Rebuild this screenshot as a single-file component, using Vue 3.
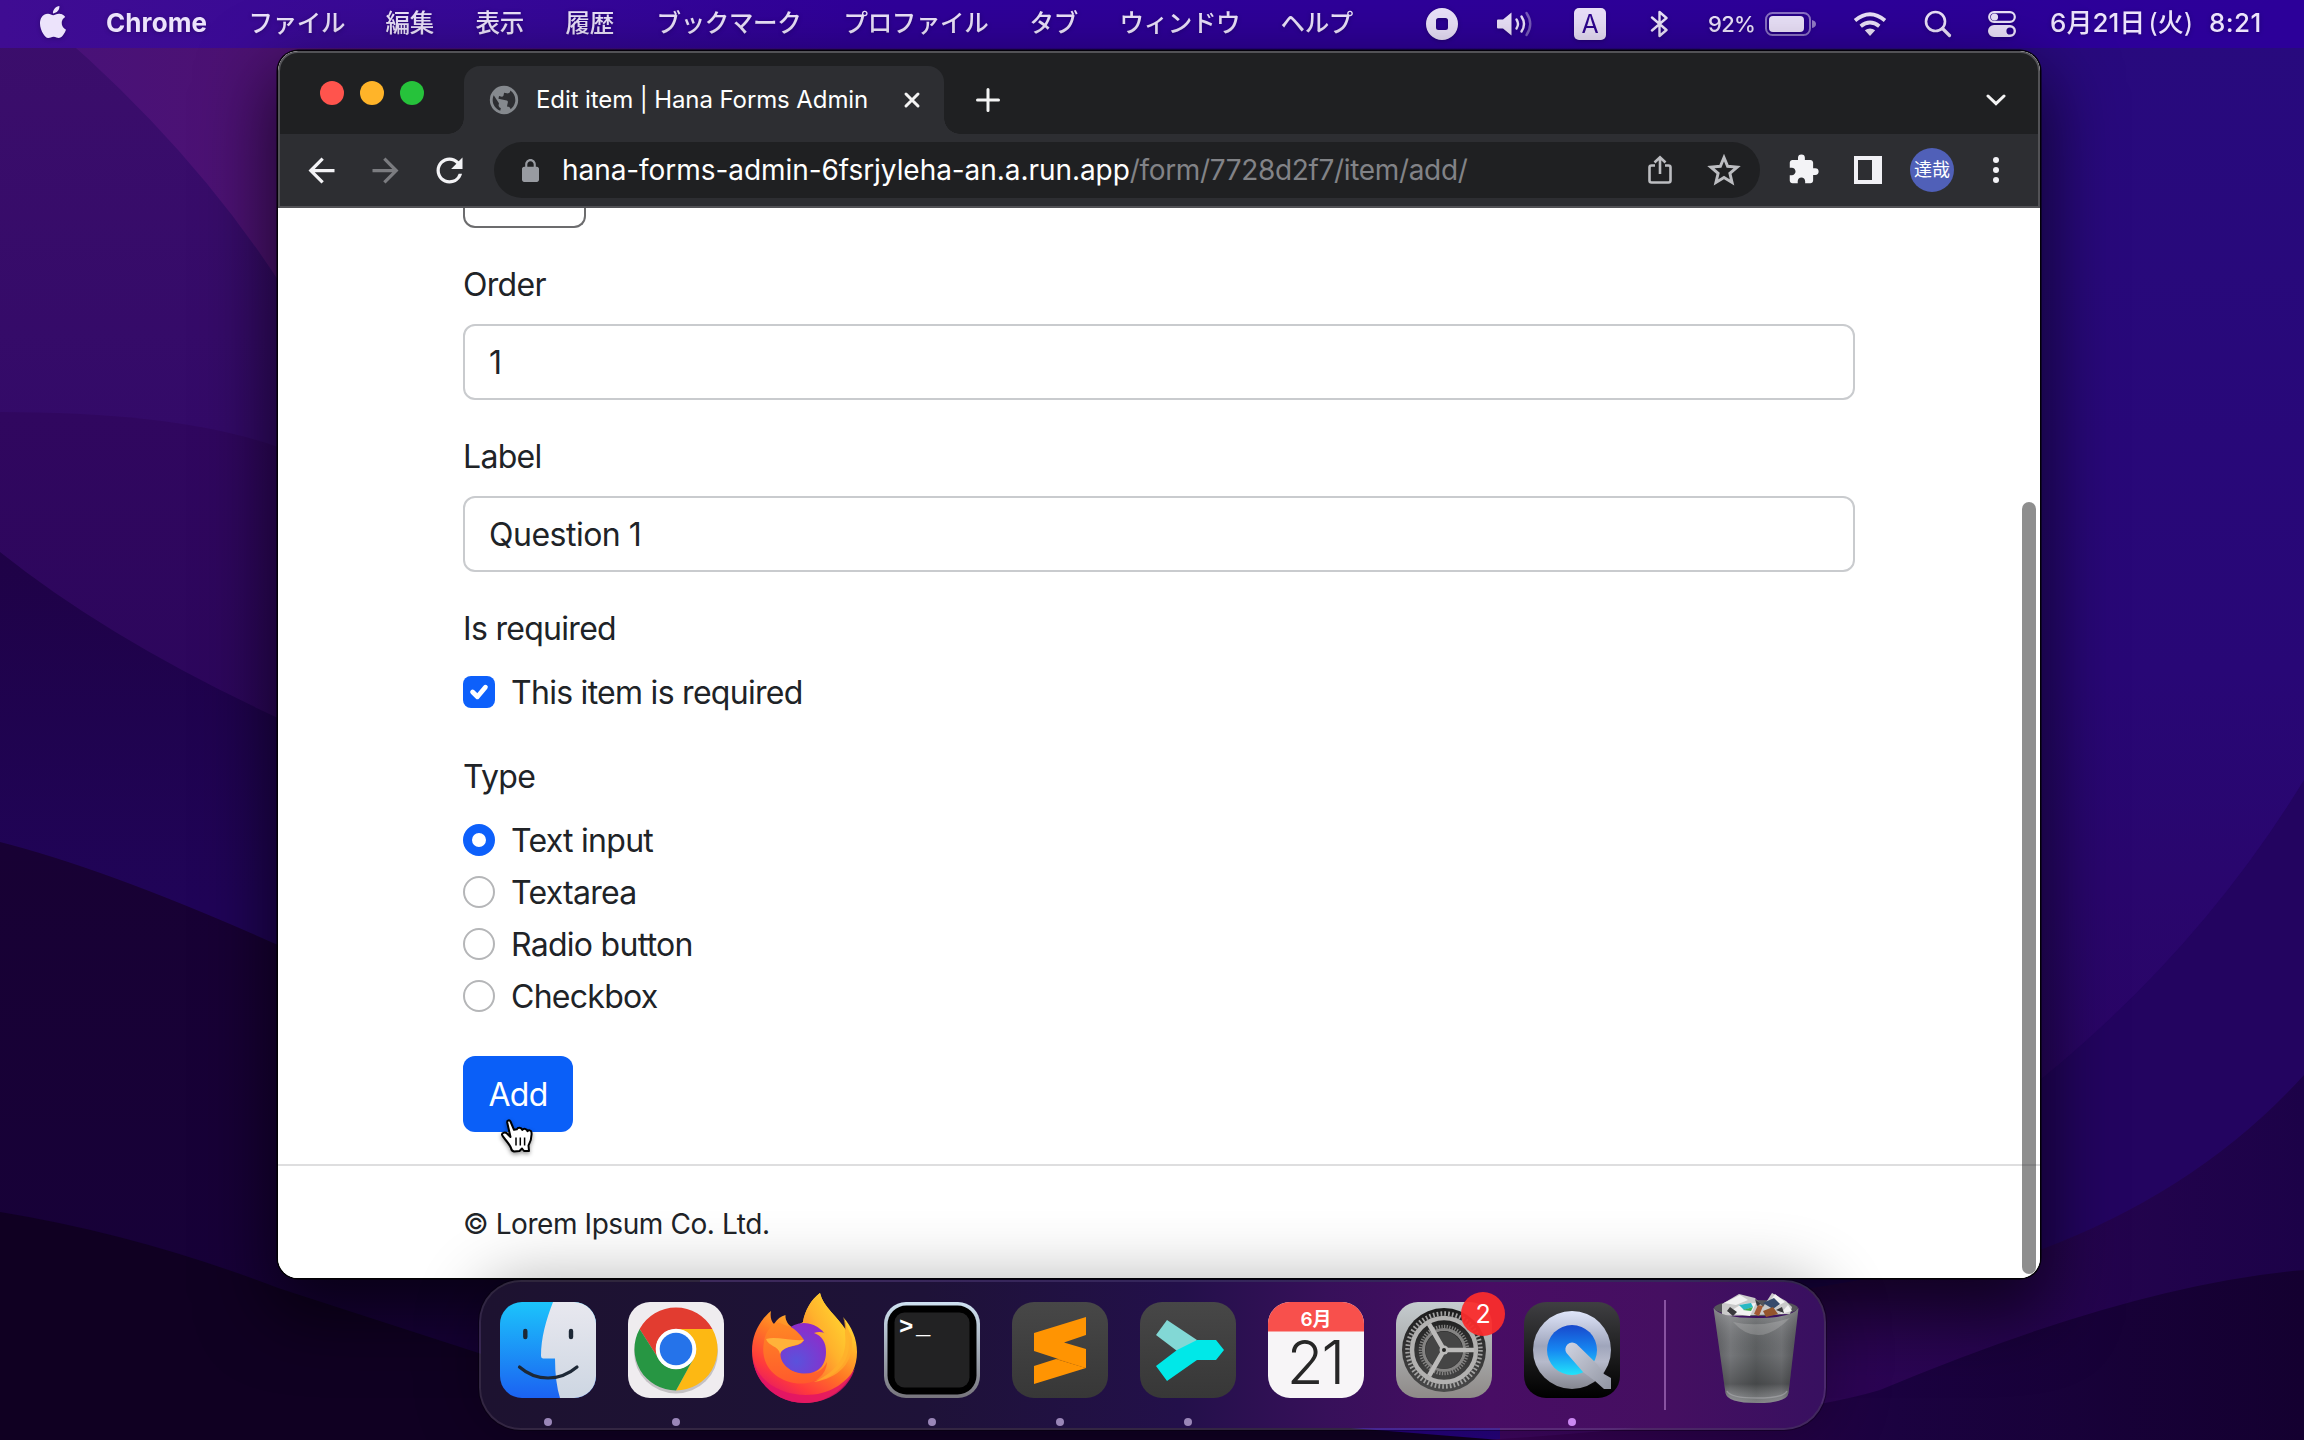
<script setup>
import { ref } from 'vue'

const menus = [
  { text: 'ファイル', width: 97 },
  { text: '編集', width: 50 },
  { text: '表示', width: 50 },
  { text: '履歴', width: 51 },
  { text: 'ブックマーク', width: 147 },
  { text: 'プロファイル', width: 146 },
  { text: 'タブ', width: 50 },
  { text: 'ウィンドウ', width: 121 },
  { text: 'ヘルプ', width: 76 }
]

const order = ref('1')
const label = ref('Question 1')
const required = ref(true)
const type = ref('Text input')
const types = ['Text input', 'Textarea', 'Radio button', 'Checkbox']
</script>

<template>
  <div class="desktop">
    <svg class="wallpaper" viewBox="0 0 2304 1440" preserveAspectRatio="none">
      <defs>
        <linearGradient id="base" x1="0" y1="0" x2="1" y2="0">
          <stop offset="0" stop-color="#47117a" />
          <stop offset=".12" stop-color="#4d1272" />
          <stop offset=".3" stop-color="#3a0a80" />
          <stop offset=".5" stop-color="#250080" />
          <stop offset="1" stop-color="#290a7c" />
        </linearGradient>
        <linearGradient id="w1" x1="0" y1="0" x2="0" y2="1">
          <stop offset="0" stop-color="#3c0e6c" />
          <stop offset=".3" stop-color="#330a68" />
          <stop offset="1" stop-color="#310a68" />
        </linearGradient>
        <linearGradient id="w2" x1="0" y1="0" x2="0" y2="1">
          <stop offset="0" stop-color="#30075f" />
          <stop offset="1" stop-color="#240556" />
        </linearGradient>
        <linearGradient id="w3" x1="0" y1="0" x2="0" y2="1">
          <stop offset="0" stop-color="#1f0247" />
          <stop offset=".4" stop-color="#200458" />
          <stop offset="1" stop-color="#200458" />
        </linearGradient>
        <linearGradient id="w4" x1="0" y1="0" x2="0" y2="1">
          <stop offset="0" stop-color="#180134" />
          <stop offset="1" stop-color="#17013a" />
        </linearGradient>
        <linearGradient id="r0" x1="0" y1="0" x2="0" y2="1">
          <stop offset="0" stop-color="#280a7e" />
          <stop offset=".45" stop-color="#280776" />
          <stop offset=".75" stop-color="#2a0565" />
          <stop offset="1" stop-color="#2d0562" />
        </linearGradient>
        <linearGradient id="r3" x1="0" y1="0" x2="1" y2="0">
          <stop offset="0" stop-color="#3f0660" />
          <stop offset=".45" stop-color="#2c0554" />
          <stop offset="1" stop-color="#1c0248" />
        </linearGradient>
        <linearGradient id="r4" x1="0" y1="0" x2="1" y2="0">
          <stop offset="0" stop-color="#3a0254" />
          <stop offset=".5" stop-color="#1b0240" />
          <stop offset="1" stop-color="#140030" />
        </linearGradient>
      </defs>
      <rect width="2304" height="1440" fill="url(#base)" />
      <path d="M0 0H20Q180 130 278 280L700 760V1440H0Z" fill="url(#w1)" />
      <path d="M0 412Q180 412 278 447L700 600V1440H0Z" fill="url(#w2)" />
      <path d="M0 552Q110 640 278 718L700 900V1440H0Z" fill="url(#w3)" />
      <path d="M0 842Q110 870 278 945L700 1100V1440H0Z" fill="url(#w4)" />
      <path d="M0 1212Q140 1235 278 1288L500 1360L1500 1440H0Z" fill="#100022" />
      <path d="M1700 40H2304V1440H1700Z" fill="url(#r0)" />
      <path d="M1700 1300L2040 1080Q2200 950 2304 780V1440H1700Z" fill="#230460" />
      <path d="M1500 1340L2040 1250Q2200 1190 2304 1075V1440H1500Z" fill="url(#r3)" />
      <path d="M1488 1440Q1780 1420 1880 1390Q2130 1285 2304 1270V1440Z" fill="url(#r4)" />
    </svg>

    <header class="menubar">
      <svg class="apple" viewBox="0 0 24 24"><path d="M12.152 6.896c-.948 0-2.415-1.078-3.96-1.04-2.04.027-3.91 1.183-4.961 3.014-2.117 3.675-.546 9.103 1.519 12.09 1.013 1.454 2.208 3.09 3.792 3.039 1.52-.065 2.09-.987 3.935-.987 1.831 0 2.35.987 3.96.948 1.637-.026 2.676-1.48 3.676-2.948 1.156-1.688 1.636-3.325 1.662-3.415-.039-.013-3.182-1.221-3.22-4.857-.026-3.04 2.48-4.494 2.597-4.559-1.429-2.09-3.623-2.324-4.39-2.376-2-.156-3.675 1.09-4.61 1.09zM15.53 3.83c.843-1.012 1.4-2.427 1.245-3.83-1.207.052-2.662.805-3.532 1.818-.78.896-1.454 2.338-1.273 3.714 1.338.104 2.715-.688 3.559-1.701" /></svg>
      <nav class="menus">
        <b class="app-name">Chrome</b>
        <span v-for="m in menus" :key="m.text" class="menu" :style="{ width: m.width + 'px' }">{{ m.text }}</span>
      </nav>
      <div class="status">
        <svg width="32" height="32" viewBox="0 0 32 32"><path fill-rule="evenodd" d="M16 0a16 16 0 1 0 0 32a16 16 0 1 0 0-32zM12.500 10h7a2.500 2.500 0 0 1 2.500 2.500v7a2.500 2.500 0 0 1-2.500 2.500h-7a2.500 2.500 0 0 1-2.500-2.500v-7a2.500 2.500 0 0 1 2.500-2.500z" /></svg>
        <svg class="speaker" width="40" height="28" viewBox="0 0 40 28"><path d="M2 9.500h5L15.500 2.500V25.500L7 18.500H2Q1 18.500 1 17.500V10.500Q1 9.500 2 9.500Z" /><g fill="none" stroke="#ece3fb" stroke-width="2.400" stroke-linecap="round"><path d="M20.500 9.500Q23.500 14 20.500 18.500" /><path d="M25.500 6.500Q30.500 14 25.500 21.500" /><path d="M30.500 3Q38 14 30.500 25" opacity=".4" /></g></svg>
        <span class="ime">A</span>
        <svg class="bt" width="21" height="28" viewBox="0 0 21 28"><path d="M3 7.500L17.500 20L10.500 26V2L17.500 8L3 20.500" fill="none" stroke="#ece3fb" stroke-width="2.400" stroke-linejoin="round" stroke-linecap="round" /></svg>
        <span class="percent">92%</span>
        <svg class="battery" width="51" height="24" viewBox="0 0 51 24"><rect x="1" y="1" width="44" height="22" rx="6.500" fill="none" stroke="#ece3fb" stroke-opacity=".5" stroke-width="2" /><rect x="4" y="4" width="35" height="16" rx="4" /><path d="M47 8Q51 9 51 12T47 16Z" opacity=".55" /></svg>
        <svg class="wifi" width="34" height="26" viewBox="0 0 34 26"><path d="M17 25L11.800 19.300Q17 15.500 22.200 19.300Z" /><g fill="none" stroke="#ece3fb" stroke-width="3.800"><path d="M7.700 15.200Q17 7.800 26.300 15.200" /><path d="M2 9.500Q17-3 32 9.500" /></g></svg>
        <svg class="search" width="28" height="28" viewBox="0 0 28 28" fill="none" stroke="#ece3fb" stroke-width="2.600" stroke-linecap="round"><circle cx="11.500" cy="11.500" r="9.500" /><path d="M18.500 18.500L25.500 25.500" stroke-width="3.200" /></svg>
        <svg class="cc" width="28" height="26" viewBox="0 0 28 26"><rect x="1.200" y="1.200" width="25.600" height="9.600" rx="4.800" fill="none" stroke="#ece3fb" stroke-width="2.200" /><circle cx="6.500" cy="6" r="3.600" /><path fill-rule="evenodd" d="M6 14H22a6 6 0 0 1 0 12H6a6 6 0 0 1 0-12zM22 16.400a3.600 3.600 0 1 0 0 7.200a3.600 3.600 0 1 0 0-7.200z" /></svg>
        <span class="date">6月21日<b class="paren">(</b>火<b class="paren close-paren">)</b></span>
        <span class="time">8:21</span>
      </div>
    </header>

    <main class="window">
      <div class="tabstrip">
        <div class="lights"><i class="red"></i><i class="yellow"></i><i class="green"></i></div>
        <div class="tab">
          <svg class="globe" viewBox="0 0 24 24"><circle cx="12" cy="12" r="10" fill="#85898e" /><path fill="#2d2e32" d="M11 19.930c-3.950-.49-7-3.850-7-7.930 0-.62.080-1.210.210-1.790L9 15v1c0 1.100.9 2 2 2zM17.900 17.390c-.26-.81-1-1.390-1.900-1.390h-1v-3c0-.55-.45-1-1-1H8v-2h2c.55 0 1-.45 1-1V7h2c1.100 0 2-.9 2-2v-.410c2.930 1.190 5 4.060 5 7.410 0 2.080-.8 3.970-2.100 5.390z" transform="rotate(12 12 12)" /></svg>
          <span class="tab-title">Edit item | Hana Forms Admin</span>
          <svg class="close" viewBox="0 0 18 18"><path d="M3 3L15 15M15 3L3 15" /></svg>
        </div>
        <svg class="plus" viewBox="0 0 24 24"><path d="M12 1.500V22.500M1.500 12H22.500" /></svg>
        <svg class="chevron" viewBox="0 0 20 12"><path d="M2 2L10 9.700L18 2" /></svg>
      </div>

      <div class="toolbar">
        <svg class="nav-icon" viewBox="0 0 24 24"><path d="M20 11H7.830l5.590-5.590L12 4l-8 8 8 8 1.410-1.410L7.830 13H20v-2z" /></svg>
        <svg class="nav-icon dim" viewBox="0 0 24 24"><path d="M4 11H16.170l-5.590-5.590L12 4l8 8-8 8-1.410-1.410L16.170 13H4v-2z" /></svg>
        <svg class="nav-icon reload" viewBox="0 0 24 24"><path d="M17.650 6.350A7.958 7.958 0 0012 4c-4.420 0-7.990 3.580-7.990 8s3.570 8 7.990 8c3.730 0 6.840-2.550 7.730-6h-2.080A5.990 5.990 0 0112 18c-3.310 0-6-2.690-6-6s2.690-6 6-6c1.660 0 3.140.69 4.220 1.780L13 11h7V4l-2.350 2.350z" /></svg>
        <div class="omnibox">
          <svg class="lock" viewBox="4 1 16 21" preserveAspectRatio="none"><path d="M18 8h-1V6c0-2.760-2.240-5-5-5S7 3.240 7 6v2H6c-1.100 0-2 .9-2 2v10c0 1.100.9 2 2 2h12c1.100 0 2-.9 2-2V10c0-1.100-.9-2-2-2zM9 6c0-1.660 1.340-3 3-3s3 1.340 3 3v2H9V6z" /></svg>
          <span class="url"><span class="host">hana-forms-admin-6fsrjyleha-an.a.run.app</span><span class="path">/form/7728d2f7/item/add/</span></span>
          <svg class="share" viewBox="0 0 26 30"><path d="M8 10.500H4.500Q2.500 10.500 2.500 12.500V25.500Q2.500 27.500 4.500 27.500H21.500Q23.500 27.500 23.500 25.500V12.500Q23.500 10.500 21.500 10.500H18M13 19V3M7.500 7.500L13 2.200L18.500 7.500" /></svg>
          <svg class="star" viewBox="0 0 30 28"><path d="M15 3L18.200 10.700L26.600 11.400L20.200 16.900L22.100 25L15 20.700L7.900 25L9.800 16.900L3.400 11.400L11.800 10.700Z" /></svg>
        </div>
        <svg class="puzzle" viewBox="0 0 24 24"><path d="M20.500 11H19V7c0-1.100-.9-2-2-2h-4V3.500a2.500 2.500 0 00-5 0V5H4c-1.100 0-1.990.9-1.990 2v3.800H3.500c1.490 0 2.700 1.210 2.700 2.700s-1.210 2.700-2.700 2.700H2V20c0 1.100.9 2 2 2h3.800v-1.500c0-1.490 1.210-2.700 2.700-2.700 1.490 0 2.700 1.210 2.700 2.700V22H17c1.100 0 2-.9 2-2v-4h1.500a2.500 2.500 0 000-5z" /></svg>
        <i class="panel"></i>
        <span class="avatar">達哉</span>
        <div class="kebab"><i></i><i></i><i></i></div>
      </div>

      <div class="page">
        <form class="form" @submit.prevent>
          <div class="outline-button"></div>
          <label class="caption">Order</label>
          <input v-model="order" class="control" type="text" />
          <label class="caption">Label</label>
          <input v-model="label" class="control" type="text" />
          <div class="caption">Is required</div>
          <label class="check" @click="required = !required">
            <span class="box"><svg v-if="required" viewBox="0 0 20 20"><path d="M6 10L9 13L14 7" /></svg></span>
            <span class="check-text">This item is required</span>
          </label>
          <div class="caption type">Type</div>
          <label v-for="t in types" :key="t" class="check option" @click="type = t">
            <span class="radio" :class="{ on: t === type }"></span>
            <span class="check-text">{{ t }}</span>
          </label>
          <button class="add" type="submit">Add</button>
        </form>
        <footer class="footer">© Lorem Ipsum Co. Ltd.</footer>
        <div class="scrollbar"></div>
      </div>
    </main>

    <svg class="cursor" viewBox="0 0 34 36"><path d="M10.500 3.500C9.600 1.600 6.800 2.200 7.200 4.500L10.500 19L7 15.500C5.300 13.800 1.800 14.600 2 16.500C2.500 19.500 8.500 24 11 30Q11.500 33 14 33.500L19.500 33L22 30.500L24 33H29L28.500 27.500C31 23 32 20 31.500 14.500C31.300 12 28.500 11.800 27.500 13.200C27 10.500 23.500 10.200 22.300 12C21.200 9 17.800 9 16.800 11.300L14 11.800L10.500 3.500Z" fill="#fff" stroke="#000" stroke-width="2" stroke-linejoin="round" /><path d="M16 19.500V27.500M20.300 19.500V27.500M24.600 19.500V27.500" stroke="#000" stroke-width="1.500" /></svg>

    <div class="dock">
      <div class="app running">
        <svg viewBox="0 0 96 96">
          <defs>
            <linearGradient id="fb" x1="0" y1="0" x2="0" y2="1"><stop offset="0" stop-color="#1cc4fb" /><stop offset="1" stop-color="#1b62f2" /></linearGradient>
            <linearGradient id="fw" x1="0" y1="0" x2="0" y2="1"><stop offset="0" stop-color="#e8e8ef" /><stop offset="1" stop-color="#cdd6e2" /></linearGradient>
            <clipPath id="sq"><rect width="96" height="96" rx="22" /></clipPath>
          </defs>
          <g clip-path="url(#sq)">
            <rect width="96" height="96" fill="url(#fb)" />
            <path d="M53 0C46 18 41 36 41 54Q41 56 43 56.500H55Q55 80 60 96H96V0Z" fill="url(#fw)" />
          </g>
          <g fill="none" stroke="#1d2836" stroke-linecap="round"><path d="M25.300 29V35M71 29V35" stroke-width="4.400" /><path d="M19.500 65Q32 76 48 76T77 65" stroke-width="3.200" /></g>
        </svg>
      </div>
      <div class="app running">
        <svg viewBox="0 0 96 96">
          <rect width="96" height="96" rx="22" fill="#efecef" />
          <ellipse cx="48" cy="50" rx="42" ry="41.500" fill="#000" opacity=".18" />
          <path d="M11.600 27A41.500 41.500 0 0 1 84.400 27H48A20 20 0 0 0 30.700 57Z" fill="#e23c30" />
          <path d="M84.400 27A41.500 41.500 0 0 1 48 88.500L65.300 57A20 20 0 0 0 48 27Z" fill="#fdb813" />
          <path d="M48 88.500A41.500 41.500 0 0 1 11.600 27L30.700 57A20 20 0 0 0 65.300 57Z" fill="#279643" />
          <circle cx="48" cy="47" r="20.300" fill="#fff" /><circle cx="48" cy="47" r="16.300" fill="#2573ea" />
        </svg>
      </div>
      <div class="app">
        <svg viewBox="0 0 96 96">
          <defs>
            <linearGradient id="ff" x1=".85" y1="0" x2=".25" y2="1"><stop offset="0" stop-color="#fff044" /><stop offset=".28" stop-color="#ffc02c" /><stop offset=".55" stop-color="#ff7a24" /><stop offset=".8" stop-color="#ff3a3c" /><stop offset="1" stop-color="#e0126c" /></linearGradient>
            <radialGradient id="fp" cx=".35" cy=".75" r=".8"><stop offset="0" stop-color="#5a52dc" /><stop offset="1" stop-color="#9328c8" /></radialGradient>
            <linearGradient id="fy" x1="1" y1="0" x2="0" y2="1"><stop offset="0" stop-color="#ffe632" /><stop offset=".5" stop-color="#ffb22c" /><stop offset="1" stop-color="#ff5a30" /></linearGradient>
            <linearGradient id="fo" x1="0" y1="0" x2="0" y2="1"><stop offset="0" stop-color="#ff8824" /><stop offset="1" stop-color="#ff5a2c" /></linearGradient>
          </defs>
          <path d="M15 9C14 14 15 19 18 22C21 17 25 14 29.500 13C29 18 32 23 37 26L47 20C49 8 55-2 64-9C67 5 81 14 90 28C90 23 89 18 87 15C96 25 101 37 101 50C101 78 77 101 48.500 101C19 101-4 78-4 49C-4 32 4 18 15 9Z" fill="url(#ff)" />
          <path d="M-3 57C2 80 25 93 50 93C72 93 90 82 99 66C93 87 73 101 48.500 101C21 101-1 81-3 57Z" fill="#e21465" opacity=".85" />
          <circle cx="48" cy="46.500" r="25.500" fill="url(#fp)" />
          <path d="M64-9C67 5 82 14 91 31C97 50 88 68 70 76C62 79 52 78 45 75C58 74 70 66 70 50C70 40 66 34 58 31C63 29 68 30 72 33C66 22 55 22 47 20C49 8 55-2 64-9Z" fill="url(#fy)" />
          <path d="M89 32C92 55 80 70 58 80C82 76 98 62 96 36L87 15C89 20 89 26 89 32Z" fill="#ffad2b" opacity=".75" />
          <path d="M18 22C23 18 28 24 33 24C38 26 44 32 48 38C44 46 32 42 25 49C22 60 33 71 48 71.500C58 72 66 70 71 60C70 76 55 84 38 81C16 77 4 60 8 40C9 32 13 26 18 22Z" fill="url(#fo)" />
          <path d="M10 37C20 34 32 39 48 38C42 46 29 42 24 52C23 44 12 44 10 37Z" fill="#ffb23a" />
        </svg>
      </div>
      <div class="app running">
        <svg viewBox="0 0 96 96">
          <defs><linearGradient id="tm" x1="0" y1="0" x2="0" y2="1"><stop offset="0" stop-color="#cfe2f2" /><stop offset="1" stop-color="#77757c" /></linearGradient></defs>
          <rect width="96" height="96" rx="22" fill="url(#tm)" /><rect x="3.500" y="3.500" width="89" height="89" rx="19" fill="#000" /><rect x="10.500" y="10.500" width="75" height="75" rx="10" fill="#222223" />
          <text x="15" y="32" class="prompt">&gt;</text><text x="32" y="32" class="prompt">_</text>
        </svg>
      </div>
      <div class="app running">
        <svg viewBox="0 0 96 96">
          <defs><linearGradient id="sl" x1="0" y1="0" x2="0" y2="1"><stop offset="0" stop-color="#474747" /><stop offset="1" stop-color="#373737" /></linearGradient></defs>
          <rect width="96" height="96" rx="22" fill="url(#sl)" />
          <path d="M22 64L44 57L74 66L22 82Z" fill="#ff9402" />
          <path d="M44 57L60 52L74 66L60 62Z" fill="#ed8500" />
          <path d="M22 31L74 15V33L52 40.500L74 47V66L22 49Z" fill="#ff9402" />
        </svg>
      </div>
      <div class="app running">
        <svg viewBox="0 0 96 96">
          <rect width="96" height="96" rx="22" fill="url(#sl)" />
          <path d="M16 33L27 18L57 38L45 55Z" fill="#82d8d5" />
          <path d="M57 38H76L84 48L76 58H57L27 79L16 64L37 48Z" fill="#00e8e8" />
        </svg>
      </div>
      <div class="app">
        <svg viewBox="0 0 96 96">
          <g clip-path="url(#sq)"><rect width="96" height="96" fill="#f7f5f7" /><rect width="96" height="29.500" fill="#f8504c" /></g>
          <text x="48" y="23.500" class="month">6月</text><text x="47" y="82" class="day">21</text>
        </svg>
      </div>
      <div class="app">
        <svg viewBox="0 0 96 96">
          <defs>
            <linearGradient id="sp" x1="0" y1="0" x2="0" y2="1"><stop offset="0" stop-color="#c5cccf" /><stop offset="1" stop-color="#8e8a88" /></linearGradient>
            <linearGradient id="sd" x1="0" y1="0" x2="0" y2="1"><stop offset="0" stop-color="#1c1c1c" /><stop offset="1" stop-color="#4a4a4a" /></linearGradient>
          </defs>
          <rect width="96" height="96" rx="22" fill="url(#sp)" />
          <circle cx="48" cy="48" r="42" fill="url(#sd)" />
          <circle cx="48" cy="48" r="36.500" fill="none" stroke="#a3a3a2" stroke-width="4.500" stroke-dasharray="1.700 2.123" />
          <circle cx="48" cy="48" r="32" fill="none" stroke="#b2b1b0" stroke-width="4.500" />
          <circle cx="48" cy="48" r="23.500" fill="none" stroke="#858483" stroke-width="3.500" stroke-dasharray="1.300 1.384" />
          <circle cx="48" cy="48" r="20.500" fill="none" stroke="#858483" stroke-width="3" />
          <circle cx="48" cy="48" r="18.500" fill="#454545" />
          <path d="M48 48H78M48 48L33 22M48 48L33 74" stroke="#bbbab9" stroke-width="4.600" />
          <circle cx="48" cy="48" r="4.500" fill="#bbbab9" /><circle cx="48" cy="48" r="2" fill="#222" />
        </svg>
        <span class="badge">2</span>
      </div>
      <div class="app running bright">
        <svg viewBox="0 0 96 96">
          <defs>
            <linearGradient id="qb" x1="0" y1="0" x2="0" y2="1"><stop offset="0" stop-color="#3f3f42" /><stop offset="1" stop-color="#000" /></linearGradient>
            <linearGradient id="qr" x1="0" y1="0" x2="0" y2="1"><stop offset="0" stop-color="#dfe5fa" /><stop offset=".45" stop-color="#9fa5bb" /><stop offset=".65" stop-color="#b6bacb" /><stop offset="1" stop-color="#84868f" /></linearGradient>
            <linearGradient id="qi" x1="0" y1="0" x2="0" y2="1"><stop offset="0" stop-color="#1848cc" /><stop offset=".5" stop-color="#1687f2" /><stop offset="1" stop-color="#22e4fa" /></linearGradient>
            <linearGradient id="qt" x1="0" y1="0" x2="1" y2="1"><stop offset="0" stop-color="#d0d4e2" /><stop offset="1" stop-color="#9195a2" /></linearGradient>
          </defs>
          <rect width="96" height="96" rx="22" fill="url(#qb)" />
          <circle cx="48" cy="48" r="39" fill="url(#qr)" /><circle cx="48" cy="48" r="25" fill="url(#qi)" />
          <path d="M42.500 51A6.800 6.800 0 0 1 52.500 42L73 62L80 72L87 76V87H80L71 79L59 70Z" fill="url(#qt)" />
        </svg>
      </div>
      <i class="separator"></i>
      <div class="app trash">
        <svg viewBox="0 0 96 96">
          <defs>
            <linearGradient id="tb" x1="0" y1="0" x2="1" y2="0"><stop offset="0" stop-color="#5d5e62" /><stop offset=".2" stop-color="#7b7d80" /><stop offset=".5" stop-color="#606365" /><stop offset=".8" stop-color="#747679" /><stop offset="1" stop-color="#505255" /></linearGradient>
            <linearGradient id="ts" x1="0" y1="0" x2="0" y2="1"><stop offset="0" stop-color="#fff" stop-opacity=".25" /><stop offset=".5" stop-color="#000" stop-opacity=".05" /><stop offset=".8" stop-color="#000" stop-opacity=".28" /><stop offset="1" stop-color="#fff" stop-opacity=".2" /></linearGradient>
          </defs>
          <ellipse cx="48" cy="6" rx="42" ry="8" fill="#55555a" />
          <path d="M14 2L31-8L47-4L55 5L64-9L78-1L84 5L82 12L14 14Z" fill="#c9c9c9" />
          <path d="M16 1L32-7L40-2L28 3ZM19 11L34 2L48 1L42 14ZM60 2L67-8L77 0L66 6ZM72 12L80 3L84 9Z" fill="#f1f1f1" />
          <path d="M31 3L43 1L45 5L36 8Z" fill="#28b8c4" /><path d="M35 8L45 5L43 9Z" fill="#3fae4f" />
          <path d="M46 12L50 3L55 4L51 14Z" fill="#a35a35" /><path d="M55 1L66-4L72 2L65 7Z" fill="#364a6c" /><path d="M55 9L65 5L70 12L58 15Z" fill="#94552d" />
          <path d="M22 5L29 10L25 14L19 9ZM47-3L53 2L49 4ZM68 8L74 5L76 11Z" fill="#39393c" />
          <path d="M5.500 6Q12 16 48 16T90.500 6L80.500 91Q79 101 49 101T17.500 91Z" fill="url(#tb)" />
          <path d="M5.500 6Q12 16 48 16T90.500 6L80.500 91Q79 101 49 101T17.500 91Z" fill="url(#ts)" />
          <path d="M25 20Q50 48 82 16Q52 26 25 20Z" fill="#c8c8c8" opacity=".28" />
          <path d="M19 89Q22 96 49 96T79 89" fill="none" stroke="#b4b4b7" stroke-width="1.500" opacity=".5" />
        </svg>
      </div>
    </div>
  </div>
</template>

<style>
body {
  margin: 0;
  overflow: hidden;
  background: #180136;
}
</style>

<style scoped>
.desktop {
  position: relative;
  width: 2304px;
  height: 1440px;
  overflow: hidden;
  font-family: Inter, "Noto Sans CJK JP", sans-serif;
}
.desktop * { box-sizing: border-box; }
svg { display: block; flex: none; }
i { display: block; flex: none; }
.wallpaper { position: absolute; inset: 0; width: 2304px; height: 1440px; }

.menubar {
  position: relative;
  display: flex;
  align-items: center;
  height: 48px;
  padding: 0 39px 0 37px;
  background: linear-gradient(90deg, #3f0c92 0, #360898 500px, #2f0099 900px, #2c0099 100%);
  color: #ece3fb;
  fill: #ece3fb;
  white-space: nowrap;
}
.menubar svg, .menubar span, .app-name { filter: drop-shadow(0 1px 2px rgba(10, 0, 40, .35)); }
.apple { width: 32px; height: 32px; margin-top: -4px; }
.menus { display: flex; gap: 40px; margin-left: 37px; margin-top: -3px; font-size: 24.500px; line-height: 48px; }
.menu { font-weight: 500; letter-spacing: -.35px; text-indent: -.5px; }
.app-name { width: 103px; font-size: 26px; font-weight: 700; letter-spacing: .1px; }
.status { display: flex; align-items: center; margin-left: auto; }
.speaker { margin-left: 38px; }
.ime { width: 32px; height: 32px; margin-left: 38px; border-radius: 5px; background: #ece3fb; color: #2e0690; font-size: 25px; line-height: 32px; text-align: center; }
.bt { margin-left: 43px; }
.percent { width: 49px; margin-left: 38px; font-size: 22px; font-weight: 500; letter-spacing: -.7px; }
.battery { margin-left: 8px; }
.wifi { margin-left: 37px; }
.search { margin-left: 37px; }
.cc { margin-left: 36px; }
.date { width: 147px; margin-left: 34px; font-size: 26px; font-weight: 500; }
.paren { margin-left: 3px; font-weight: 400; }
.close-paren { margin-left: 0; }
.time { width: 56px; margin-left: 12px; font-size: 26px; font-weight: 500; letter-spacing: .4px; }
.date, .time { line-height: 44px; margin-top: -3px; }

.window {
  position: absolute;
  left: 278px;
  top: 51px;
  display: flex;
  flex-direction: column;
  width: 1762px;
  height: 1227px;
  border-radius: 20px;
  overflow: hidden;
  background: #fff;
  box-shadow: 0 0 0 1.500px rgba(0, 0, 0, .9), 0 28px 70px 8px rgba(0, 0, 0, .62);
}
.tabstrip {
  display: flex;
  height: 83px;
  flex: none;
  background: #1f2022;
  border: 2px solid #525256;
  border-bottom: 0;
  border-radius: 20px 20px 0 0;
}
.lights { display: flex; gap: 16px; width: 184px; padding: 28px 0 0 40px; }
.lights i { width: 24px; height: 24px; border-radius: 50%; }
.red { background: #ff544d; }
.yellow { background: #ffb429; }
.green { background: #26c23b; }
.tab {
  position: relative;
  display: flex;
  align-items: center;
  width: 480px;
  height: 68px;
  margin-top: 13px;
  padding-left: 23px;
  border-radius: 16px 16px 0 0;
  background: #2d2e32;
}
.tab::before, .tab::after {
  content: "";
  position: absolute;
  bottom: 0;
  width: 16px;
  height: 16px;
}
.tab::before { left: -16px; background: radial-gradient(circle at 0 0, transparent 15.500px, #2d2e32 16px); }
.tab::after { right: -16px; background: radial-gradient(circle at 100% 0, transparent 15.500px, #2d2e32 16px); }
.globe { width: 34px; height: 34px; }
.tab-title { width: 331px; height: 30px; margin: -1px 0 0 15px; line-height: 30px; color: #fff; font-size: 24px; letter-spacing: -.1px; white-space: nowrap; }
.close { width: 18px; height: 18px; margin-left: 36px; }
.close path, .plus path, .chevron path { fill: none; stroke: #f4f4f4; stroke-width: 3; stroke-linecap: round; }
.plus { width: 24px; height: 24px; margin: 35px 0 0 32px; }
.chevron { width: 20px; height: 12px; margin: 41px 32px 0 auto; }

.toolbar {
  display: flex;
  align-items: center;
  height: 74px;
  flex: none;
  padding-left: 22px;
  background: #2d2e32;
  border: 2px solid #525256;
  border-top: 0;
  fill: #f3f3f6;
}
.nav-icon { width: 39px; height: 39px; margin-right: 25px; }
.dim { fill: #7b7c80; }
.omnibox { display: flex; align-items: center; width: 1266px; height: 56px; border-radius: 28px; background: #1f2022; }
.lock { width: 17px; height: 23px; margin-left: 28px; fill: #989ba1; }
.url { display: flex; width: 906px; margin-left: 23px; font-size: 28px; line-height: 56px; white-space: nowrap; }
.host { color: #fff; letter-spacing: -.06px; }
.path { color: #828387; letter-spacing: -.34px; }
.share { width: 26px; height: 30px; margin-left: 179px; }
.star { width: 34px; height: 32px; margin-left: 34px; }
.share path, .star path { fill: none; stroke: #bcbdc1; stroke-width: 2.600; }
.puzzle { width: 33px; height: 33px; margin-left: 27px; margin-top: -2px; }
.panel { width: 28px; height: 28px; margin-left: 34px; border: solid #f1f1f5; border-width: 4px 10px 4px 4px; }
.avatar { width: 44px; height: 44px; margin-left: 28px; border-radius: 50%; background: #5060b8; color: #fff; font-size: 18px; line-height: 43px; text-align: center; }
.kebab { display: flex; flex-direction: column; gap: 4px; margin-left: 39px; }
.kebab i { width: 6px; height: 6px; border-radius: 50%; background: #f3f3f6; }

.page { position: relative; flex: 1; background: #fff; color: #202327; }
.form { width: 1392px; margin-left: 185px; height: 956px; display: flex; flex-direction: column; align-items: flex-start; font-size: 32px; line-height: 48px; }
.outline-button { width: 123px; height: 20px; flex: none; border: 2px solid #6c6c6e; border-top: 0; border-radius: 0 0 12px 12px; }
.caption { height: 48px; margin-top: 32px; margin-bottom: 16px; padding-top: 1px; letter-spacing: -.7px; }
.control { width: 1392px; height: 76px; padding: 0 24px; border: 2px solid #c9cbce; border-radius: 12px; outline: 0; background: #fff; font: inherit; color: inherit; letter-spacing: -.5px; }
.check { display: flex; align-items: center; gap: 16px; height: 48px; }
.check-text { padding-top: 2px; letter-spacing: -.72px; }
.box { width: 32px; height: 32px; border-radius: 8px; background: #0d60fb; }
.box svg { width: 32px; height: 32px; }
.box path { fill: none; stroke: #fff; stroke-width: 3; stroke-linecap: round; stroke-linejoin: round; }
.type { margin-top: 36px; }
.option { margin-bottom: 4px; }
.radio { width: 32px; height: 32px; border: 2px solid #b5b6b8; border-radius: 50%; }
.radio.on { border: 9px solid #0d60fb; }
.add { width: 110px; height: 76px; margin-top: 32px; padding: 2px 0 0; border: 0; border-radius: 12px; background: #0a5ff8; color: #fff; font: inherit; letter-spacing: -.8px; flex: none; }
.footer { height: 114px; padding: 0 0 0 185px; border-top: 2px solid #dededf; font-size: 28px; line-height: 116px; letter-spacing: -.42px; }
.scrollbar { position: absolute; left: 1744px; top: 294px; width: 14px; height: 772px; border-radius: 7px; background: rgba(50, 50, 50, .55); }
.cursor { position: absolute; left: 500px; top: 1118px; width: 34px; height: 36px; filter: drop-shadow(0 2px 2px rgba(0, 0, 0, .4)); }

.dock {
  position: absolute;
  left: 479px;
  top: 1280px;
  display: flex;
  width: 1347px;
  height: 150px;
  padding: 20px 0 0 19px;
  border: 2px solid rgba(255, 255, 255, .15);
  border-radius: 42px;
  background: linear-gradient(90deg, #1d1230 0, #1e1238 33%, #23104a 52%, #37105a 63%, #480d64 75%, #450f61 88%, #381060 100%);
  background-clip: padding-box;
  box-shadow: 0 0 0 1px rgba(0, 0, 0, .3), 0 0 66px rgba(0, 0, 0, .3);
}
.app { position: relative; width: 96px; height: 124px; margin-right: 32px; flex: none; }
.app svg { width: 96px; height: 96px; overflow: visible; }
.running::after { content: ""; display: block; width: 8px; height: 8px; margin: 20px auto 0; border-radius: 50%; background: #9a86b8; }
.bright::after { background: #cb88f2; }
.prompt { fill: #fff; font: 700 24px "Liberation Mono", monospace; }
.month { fill: #fff; font-size: 19px; font-weight: 600; text-anchor: middle; }
.day { fill: #272727; font-size: 60px; font-weight: 300; text-anchor: middle; letter-spacing: -2px; }
.badge { position: absolute; left: 65px; top: -10px; width: 44px; height: 44px; border-radius: 50%; background: rgba(250, 44, 44, .95); color: #fff; font-size: 25px; line-height: 44px; text-align: center; }
.separator { width: 2px; height: 110px; margin: -2px 42px 0 12px; background: rgba(205, 150, 225, .5); }
.trash { margin-right: 0; }
</style>
